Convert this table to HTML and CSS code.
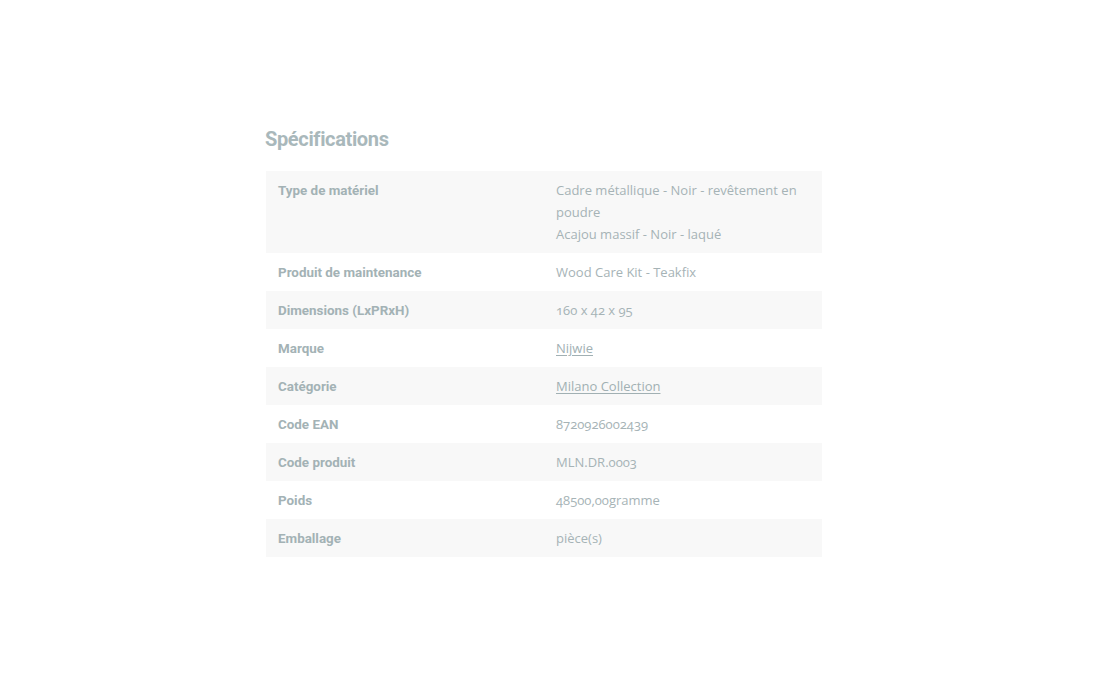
FILE: index.html
```html
<!DOCTYPE html>
<html lang="fr">
<head>
<meta charset="utf-8">
<link rel="stylesheet" href="styles.css">
</head>
<body>
<main class="page">
  <section class="specs">
    <h2 class="specs-title">Spécifications</h2>
    <div class="spec-table">
      <div class="spec-row alt">
        <div class="spec-label">Type de matériel</div>
        <div class="spec-value">Cadre métallique - Noir - revêtement en poudre<br>Acajou massif - Noir - laqué</div>
      </div>
      <div class="spec-row">
        <div class="spec-label">Produit de maintenance</div>
        <div class="spec-value">Wood Care Kit - Teakfix</div>
      </div>
      <div class="spec-row alt">
        <div class="spec-label">Dimensions (LxPRxH)</div>
        <div class="spec-value num">160 x 42 x 95</div>
      </div>
      <div class="spec-row">
        <div class="spec-label">Marque</div>
        <div class="spec-value"><a href="#">Nijwie</a></div>
      </div>
      <div class="spec-row alt">
        <div class="spec-label">Catégorie</div>
        <div class="spec-value"><a href="#">Milano Collection</a></div>
      </div>
      <div class="spec-row">
        <div class="spec-label">Code EAN</div>
        <div class="spec-value num">8720926002439</div>
      </div>
      <div class="spec-row alt">
        <div class="spec-label">Code produit</div>
        <div class="spec-value num">MLN.DR.0003</div>
      </div>
      <div class="spec-row">
        <div class="spec-label">Poids</div>
        <div class="spec-value num">48500,00gramme</div>
      </div>
      <div class="spec-row alt">
        <div class="spec-label">Emballage</div>
        <div class="spec-value">pièce(s)</div>
      </div>
    </div>
  </section>
</main>
</body>
</html>
```

FILE: styles.css
```css
html, body {
  margin: 0;
  padding: 0;
  background: #ffffff;
}

body {
  font-family: "Open Sans", "Liberation Sans", sans-serif;
  color: #a6b4b7;
}

.page {
  width: 1100px;
  height: 688px;
  box-sizing: border-box;
  padding-top: 127px;
  padding-left: 266px;
}

.specs {
  width: 556px;
}

.specs-title {
  margin: 0 0 20px -1px;
  font-family: "Roboto", "Liberation Sans", sans-serif;
  font-size: 20px;
  line-height: 24px;
  font-weight: 700;
  letter-spacing: -0.35px;
  color: #a9b8bb;
}

.spec-table {
  display: flex;
  flex-direction: column;
}

.spec-row {
  display: grid;
  grid-template-columns: 278px 278px;
}

.spec-row.alt {
  background: #f8f8f8;
}

.spec-label,
.spec-value {
  padding: 8px 12px;
  font-size: 13px;
  line-height: 22px;
}

.spec-label {
  font-family: "Roboto", "Liberation Sans", sans-serif;
  font-size: 13.4px;
  font-weight: 700;
  color: #a3b2b5;
  padding-top: 9px;
  padding-bottom: 7px;
}

.spec-value {
  color: #a6b3b6;
}

.spec-value.num {
  font-variant-numeric: oldstyle-nums;
}

.spec-value a {
  color: #a1b0b3;
  text-decoration: underline;
  text-underline-offset: 2px;
}
```
